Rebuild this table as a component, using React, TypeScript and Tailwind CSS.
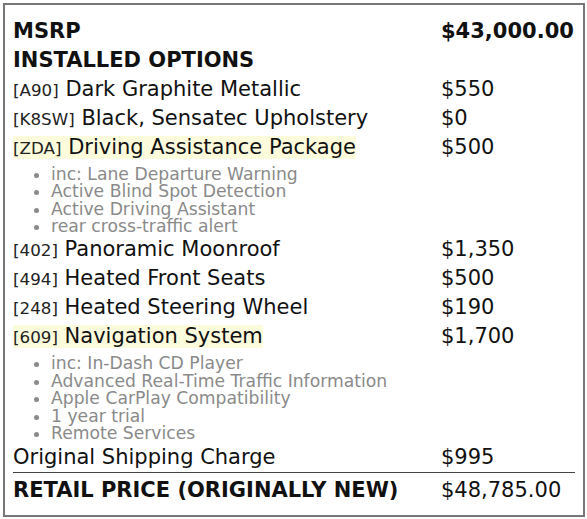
import { Fragment } from "react";

const font = { fontFamily: "'DejaVu Sans', Verdana, sans-serif" };

type Opt = { code: string; name: string; price: string; hi?: boolean; inc?: string[]; incCls?: string };

const options: Opt[] = [
  { code: "A90", name: "Dark Graphite Metallic", price: "$550" },
  { code: "K8SW", name: "Black, Sensatec Upholstery", price: "$0" },
  {
    code: "ZDA",
    name: "Driving Assistance Package",
    price: "$500",
    hi: true,
    incCls: "pt-[4px] leading-[17.3px]",
    inc: ["inc: Lane Departure Warning", "Active Blind Spot Detection", "Active Driving Assistant", "rear cross-traffic alert"],
  },
  { code: "402", name: "Panoramic Moonroof", price: "$1,350" },
  { code: "494", name: "Heated Front Seats", price: "$500" },
  { code: "248", name: "Heated Steering Wheel", price: "$190" },
  {
    code: "609",
    name: "Navigation System",
    price: "$1,700",
    hi: true,
    incCls: "pt-[4px] leading-[17.5px]",
    inc: [
      "inc: In-Dash CD Player",
      "Advanced Real-Time Traffic Information",
      "Apple CarPlay Compatibility",
      "1 year trial",
      "Remote Services",
    ],
  },
];

function Row({ label, price, bold }: { label: React.ReactNode; price: React.ReactNode; bold?: boolean }) {
  return (
    <tr>
      <td className="pt-[3px] pb-[3px] pl-0">
        <div className={`h-[23px] leading-[23px] whitespace-nowrap ${bold ? "font-bold" : ""}`}>{label}</div>
      </td>
      <td className="pt-[3px] pb-[3px] pl-0">
        <div className={`h-[23px] leading-[23px] whitespace-nowrap ${bold ? "font-bold" : ""}`}>{price}</div>
      </td>
    </tr>
  );
}

export default function App() {
  return (
    <div className="p-[3px] bg-white" style={font}>
      <div className="w-[582px] h-[514px] border-2 border-[#777] pl-[8px] pt-[12px] text-[21px] text-[#111]">
        <table className="w-[562px] border-collapse table-fixed">
          <colgroup>
            <col className="w-[428px]" />
            <col />
          </colgroup>
          <tbody>
            <Row label="MSRP" price="$43,000.00" bold />
            <Row label="INSTALLED OPTIONS" price="" bold />
            {options.map((o) => (
              <Fragment key={o.code}>
                <Row
                  label={
                    <span className={o.hi ? "bg-[#fcfbdc] inline-block h-[23px]" : ""}>
                      <span className="text-[16.7px] leading-none text-[#222]">[{o.code}]</span> {o.name}
                    </span>
                  }
                  price={o.price}
                />
                {o.inc && (
                  <tr>
                    <td colSpan={2} className={`${o.incCls} pb-0`}>
                      <ul className="list-disc pl-[38px] text-[17.2px] text-[#8a8a8a]">
                        {o.inc.map((i) => (
                          <li key={i}>{i}</li>
                        ))}
                      </ul>
                    </td>
                  </tr>
                )}
              </Fragment>
            ))}
            <Row label="Original Shipping Charge" price="$995" />
            <tr className="border-t border-[#444]">
              <td className="pt-[6px] pb-[3px] pl-0">
                <div className="h-[23px] leading-[23px] whitespace-nowrap font-bold">RETAIL PRICE (ORIGINALLY NEW)</div>
              </td>
              <td className="pt-[6px] pb-[3px] pl-0">
                <div className="h-[23px] leading-[23px] whitespace-nowrap">$48,785.00</div>
              </td>
            </tr>
          </tbody>
        </table>
      </div>
    </div>
  );
}
